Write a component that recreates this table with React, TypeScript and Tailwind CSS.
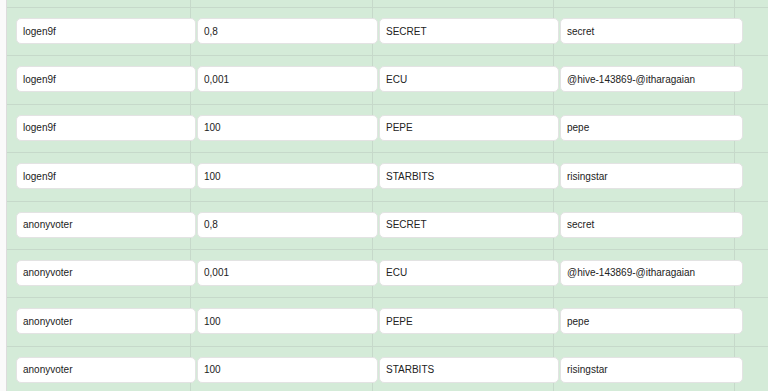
import React from "react";

const rows: [string, string, string, string][] = [
  ["logen9f", "0,8", "SECRET", "secret"],
  ["logen9f", "0,001", "ECU", "@hive-143869-@itharagaian"],
  ["logen9f", "100", "PEPE", "pepe"],
  ["logen9f", "100", "STARBITS", "risingstar"],
  ["anonyvoter", "0,8", "SECRET", "secret"],
  ["anonyvoter", "0,001", "ECU", "@hive-143869-@itharagaian"],
  ["anonyvoter", "100", "PEPE", "pepe"],
  ["anonyvoter", "100", "STARBITS", "risingstar"],
];

const widths = ["w-[180px]", "w-[181px]", "w-[180px]", "w-[183px]"];

export default function App() {
  return (
    <div
      className="flex w-[768px] h-[391px] overflow-hidden text-[10px] text-[#222]"
      style={{ fontFamily: '"Liberation Sans", Arial, sans-serif' }}
    >
      <div className="w-[7px] shrink-0 bg-[#fafafa] border-r border-[#dcdcdc]" />
      <div className="flex-1 flex flex-col bg-[#d4ebd8] bg-[linear-gradient(to_right,transparent_183px,#c6d9ca_183px,#c6d9ca_184px,transparent_184px,transparent_365px,#c6d9ca_365px,#c6d9ca_366px,transparent_366px,transparent_546px,#c6d9ca_546px,#c6d9ca_547px,transparent_547px,transparent_727px,#c6d9ca_727px,#c6d9ca_728px,transparent_728px)]">
        <div className="h-[8px] shrink-0 border-b border-[#c6d9ca]" />
        {rows.map((r, i) => (
          <div
            key={i}
            className="h-[48.4px] shrink-0 border-b border-[#c6d9ca] flex items-start pt-[10px] pl-[9px] gap-px"
          >
            {r.map((c, j) => (
              <div
                key={j}
                className={`${widths[j]} h-[26px] shrink-0 bg-white rounded-[5px] border border-[#e3e3e3] flex items-center pl-[6px] whitespace-nowrap`}
              >
                {c}
              </div>
            ))}
          </div>
        ))}
      </div>
    </div>
  );
}
